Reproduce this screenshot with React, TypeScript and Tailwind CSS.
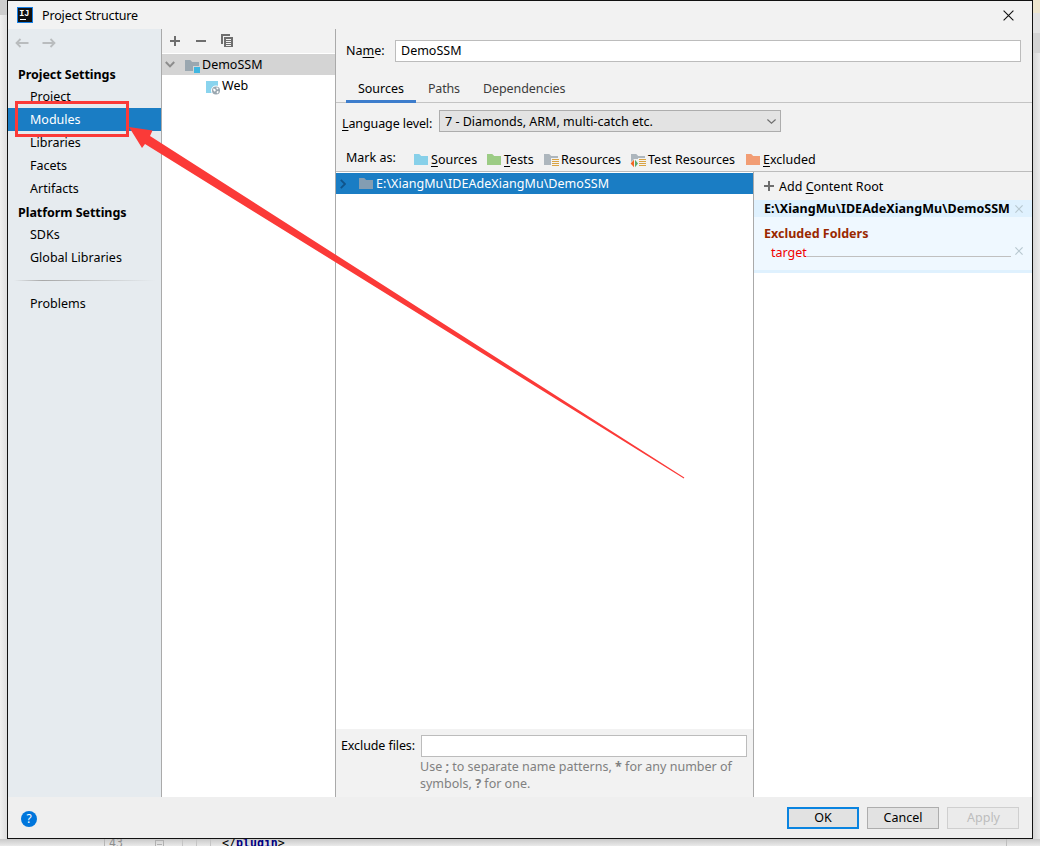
import type { ReactNode } from "react";

function Mnemonic({ children }: { children: ReactNode }) {
  return <span className="underline decoration-1 underline-offset-2">{children}</span>;
}

function FolderShape({ fill }: { fill: string }) {
  return <path d="M1 2h5.2l2 2H15v9H1z" fill={fill} />;
}

function Folder({ fill, kind }: { fill: string; kind?: "module" | "resources" | "test" }) {
  return (
    <svg width="16" height="16" viewBox="0 0 16 16" className="shrink-0" shapeRendering="geometricPrecision">
      <FolderShape fill={fill} />
      {kind === "module" && (
        <>
          <path d="M9 8h7v7H9z" fill="#d4d4d4" />
          <path d="M10 9h6v6h-6z" fill="#40b6e0" />
        </>
      )}
      {(kind === "resources" || kind === "test") && (
        <>
          <path d="M8 6h8v10H8z" fill="#f2f2f2" />
          <path d="M9 7h7v1H9zM9 9h7v1H9zM9 11h7v1H9zM9 13h7v1H9z" fill="#d9a343" />
        </>
      )}
      {kind === "test" && (
        <>
          <path d="M0 11.5L4 7h4v9H4z" fill="#f2f2f2" />
          <path d="M4 7.8v7.4L.6 11.5z" fill="#f26522" />
          <path d="M5 7.8v7.4l3-3.7z" fill="#59a869" />
        </>
      )}
    </svg>
  );
}

function WebIcon() {
  return (
    <svg width="16" height="16" viewBox="0 0 16 16" className="shrink-0">
      <path d="M1 2h12v12H1z" fill="#8ad4ee" />
      <circle cx="11" cy="11.5" r="5" fill="#ffffff" />
      <circle cx="11" cy="11.5" r="4" fill="#9aa7b0" />
      <path d="M8.2 9.6l2 .3.6 1.6-1 1.2-1.6-1.4zM11.5 8.3l2 .8-.6 1.4-1.4-.5zM12 12l1.8.4-1 2-1.2-.6z" fill="#ffffff" />
    </svg>
  );
}

function Plus() {
  return (
    <svg width="10" height="10" viewBox="0 0 10 10" className="shrink-0">
      <path d="M4 0h2v4h4v2H6v4H4V6H0V4h4z" fill="#6e6e6e" />
    </svg>
  );
}

function SmallCross() {
  return (
    <svg width="8" height="8" viewBox="0 0 8 8" className="shrink-0">
      <path d="M.4.4l7.2 7.2M7.6.4L.4 7.6" stroke="#b8c8d0" strokeWidth="1.2" fill="none" />
    </svg>
  );
}

function NavArrow({ flip }: { flip?: boolean }) {
  return (
    <svg width="14" height="10" viewBox="0 0 14 10" className={flip ? "-scale-x-100" : ""}>
      <path d="M13.5 5H1.5M5.5 1l-4 4 4 4" stroke="#b9bcbe" strokeWidth="1.8" fill="none" />
    </svg>
  );
}

function SideItem({ label, active }: { label: string; active?: boolean }) {
  return (
    <div className={`h-[23px] pl-[22px] leading-[23px] ${active ? "bg-[#1a7dc4] text-white" : ""}`}>{label}</div>
  );
}

function SideHeader({ label }: { label: string }) {
  return <div className="h-[23px] pl-[10px] font-bold leading-[25px] tracking-[-0.05px]">{label}</div>;
}

function Sidebar() {
  return (
    <aside className="flex w-[153px] shrink-0 flex-col bg-[#e6ebef]">
      <div className="flex h-[33px] gap-[13px] pl-[7px] pt-[9px]">
        <NavArrow />
        <NavArrow flip />
      </div>
      <SideHeader label="Project Settings" />
      <SideItem label="Project" />
      <SideItem label="Modules" active />
      <SideItem label="Libraries" />
      <SideItem label="Facets" />
      <SideItem label="Artifacts" />
      <SideHeader label="Platform Settings" />
      <SideItem label="SDKs" />
      <SideItem label="Global Libraries" />
      <div className="mx-[6px] mb-[11px] mt-[11px] h-px bg-linear-to-r from-transparent via-[#a8a8a8] via-20% to-transparent" />
      <SideItem label="Problems" />
    </aside>
  );
}

function ModuleTree() {
  return (
    <section className="flex w-[175px] shrink-0 flex-col border-x border-[#aaaaaa] bg-white">
      <div className="flex h-[24px] items-center bg-[#f2f2f2] pl-[8px]">
        <Plus />
        <svg width="10" height="10" viewBox="0 0 10 10" className="ml-[16px]">
          <path d="M0 4h10v2H0z" fill="#6e6e6e" />
        </svg>
        <svg width="13" height="13" viewBox="0 0 13 13" className="-mt-px ml-[15px]">
          <path d="M0 0h9v2H2v8H0z" fill="#6e6e6e" />
          <path d="M3 3h9v10H3z" fill="#6e6e6e" />
          <path d="M5 5h5v1H5zM5 7h5v1H5zM5 9h5v1H5zM5 11h5v1H5z" fill="#f2f2f2" />
        </svg>
      </div>
      <div className="mt-px flex h-[21px] items-center bg-[#d4d4d4] pl-[3px] leading-[21px]">
        <svg width="10" height="7" viewBox="0 0 10 7">
          <path d="M.8 1L5 5.4 9.2 1" stroke="#8c8c8c" strokeWidth="2" fill="none" />
        </svg>
        <span className="ml-[9px] mr-[2px] mt-[2px]">
          <Folder fill="#9aa7b0" kind="module" />
        </span>
        DemoSSM
      </div>
      <div className="flex h-[21px] items-center pl-[43px] leading-[21px]">
        <span className="mr-px mt-[2px]">
          <WebIcon />
        </span>
        Web
      </div>
    </section>
  );
}

function MarkAs() {
  return (
    <div className="flex h-[39px] items-center pl-[10px] pt-[14px]">
      <span className="-mt-[1px] mr-[15px] w-[52px] whitespace-nowrap">Mark as:</span>
      <div className="flex items-center pt-[3px] leading-[20px]">
        <span className="flex w-[73px] items-center gap-[2px]">
          <Folder fill="#87d0e9" />
          <span>
            <Mnemonic>S</Mnemonic>ources
          </span>
        </span>
        <span className="flex w-[57px] items-center gap-[2px]">
          <Folder fill="#9ccc85" />
          <span>
            <Mnemonic>T</Mnemonic>ests
          </span>
        </span>
        <span className="flex w-[87px] items-center gap-[2px]">
          <Folder fill="#adb6bd" kind="resources" />
          <span>Resources</span>
        </span>
        <span className="flex w-[115px] items-center gap-[2px]">
          <Folder fill="#adb6bd" kind="test" />
          <span>Test Resources</span>
        </span>
        <span className="flex items-center gap-[2px]">
          <Folder fill="#f29d74" />
          <span>
            <Mnemonic>E</Mnemonic>xcluded
          </span>
        </span>
      </div>
    </div>
  );
}

function ContentRoots() {
  return (
    <div className="flex min-w-0 flex-1 flex-col border-l border-[#aaaaaa] bg-white">
      <div className="flex h-[28px] items-center gap-[5px] bg-[#f2f2f2] pl-[10px]">
        <Plus />
        <span className="pt-[3px]">
          Add <Mnemonic>C</Mnemonic>ontent Root
        </span>
      </div>
      <div className="flex h-[17px] items-center bg-[#dff1fe] pl-[10px] font-bold leading-[17px]">
        <span className="w-[251px] whitespace-nowrap tracking-[0.05px]">E:\XiangMu\IDEAdeXiangMu\DemoSSM</span>
        <SmallCross />
      </div>
      <div className="flex h-[53px] flex-col bg-[#eff8ff] pl-[10px]">
        <div className="mt-[7px] h-[19px] font-bold leading-[20px] text-[#9a2800]">Excluded Folders</div>
        <div className="flex h-[18px] items-center pl-[7px] leading-[18px] text-[#f00000]">
          <span className="mt-[1px] leading-[17px]">target</span>
          <span className="mt-[9px] h-px flex-1 bg-[#c0c0c0]" />
          <span className="-mt-[2px] ml-[4px] mr-[9px] flex">
            <SmallCross />
          </span>
        </div>
      </div>
      <div className="h-[3px] bg-[#dff1fe]" />
    </div>
  );
}

function Editor() {
  return (
    <main className="flex min-w-0 flex-1 flex-col bg-[#f2f2f2]">
      <div className="flex h-[44px] items-start pl-[10px] pt-[11px]">
        <span className="w-[49px] leading-[21px]">
          Na<Mnemonic>m</Mnemonic>e:
        </span>
        <div className="h-[22px] w-[626px] border border-[#bcbcbc] bg-white pl-[5px] leading-[19px]">DemoSSM</div>
      </div>
      <div className="flex h-[30px] border-b border-[#c4c4c4] pl-[10px] leading-[31px] text-[#3c3c3c]">
        <div className="h-[30px] w-[70px] border-b-[3px] border-[#3d7dcc] text-center text-black">Sources</div>
        <div className="ml-[12px] w-[55px] tracking-[-0.2px]">Paths</div>
        <div className="tracking-[-0.08px]">Dependencies</div>
      </div>
      <div className="flex h-[29px] items-start pl-[6px] pt-[7px]">
        <span className="w-[97px] tracking-[-0.1px] leading-[27px]">
          <Mnemonic>L</Mnemonic>anguage level:
        </span>
        <div className="flex h-[22px] w-[342px] justify-between border border-[#adadad] bg-[#e3e3e3] pl-[5px] pr-[3px] leading-[21px]">
          <span>7 - Diamonds, ARM, multi-catch etc.</span>
          <svg width="11" height="20" viewBox="0 0 11 20">
            <path d="M1.4 8.5l4.1 3.6 4.1-3.6" stroke="#6e6e6e" strokeWidth="1.2" fill="none" />
          </svg>
        </div>
      </div>
      <MarkAs />
      <div className="flex min-h-0 flex-1 border-t border-[#bcbcbc]">
        <div className="flex w-[417px] shrink-0 flex-col bg-white">
          <div className="mt-px flex h-[21px] items-center bg-[#1a7dc4] pl-[4px] leading-[21px] text-white">
            <svg width="6" height="10" viewBox="0 0 6 10">
              <path d="M.8.8L5 5 .8 9.2" stroke="#10548a" strokeWidth="1.8" fill="none" />
            </svg>
            <span className="ml-[12px] mr-[2px]">
              <Folder fill="#839db2" />
            </span>
            <span className="tracking-[0.04px]">E:\XiangMu\IDEAdeXiangMu\DemoSSM</span>
          </div>
          <div className="flex-1" />
          <div className="flex h-[68px] bg-[#f2f2f2] pl-[5px] pt-[6px]">
            <span className="w-[80px] whitespace-nowrap tracking-[-0.1px] leading-[21px]">Exclude files:</span>
            <div className="w-[326px]">
              <div className="h-[22px] border border-[#bcbcbc] bg-white" />
              <p className="-ml-px mt-[1px] whitespace-nowrap leading-[17px] text-[#808080]">
                Use <b>;</b> to separate name patterns, <b>*</b> for any number of
                <br />
                symbols, <b>?</b> for one.
              </p>
            </div>
          </div>
        </div>
        <ContentRoots />
      </div>
    </main>
  );
}

function Footer() {
  return (
    <footer className="flex h-[41px] items-center bg-[#efefef] pl-[13px] pr-[13px]">
      <div className="mt-[3px] flex h-4 w-4 items-center justify-center rounded-full bg-[#0076dc] text-[12px] leading-[16px] text-white">
        ?
      </div>
      <div className="flex-1" />
      <div className="flex gap-[8px] text-center">
        <button className="h-[22px] w-[72px] border-2 border-[#0a84e0] bg-[#e2e2e2] leading-[18px]">OK</button>
        <button className="h-[22px] w-[72px] border border-[#adadad] bg-[#e2e2e2] leading-[20px]">Cancel</button>
        <button className="h-[22px] w-[72px] border border-[#cfcfcf] bg-[#ebebeb] pl-[1px] leading-[20px] text-[#bdbdbd]">
          Apply
        </button>
      </div>
    </footer>
  );
}

function TitleBar() {
  return (
    <header className="flex h-[28px] items-center bg-[#f2f2f2] pl-[9px] pr-[18px]">
      <svg width="16" height="16" viewBox="0 0 16 16">
        <path d="M0 0h16v16H0z" fill="#167fe6" />
        <path d="M1 1h14v14H1z" fill="#111111" />
        <text x="2.2" y="8.6" fontSize="8.5" fontWeight="700" fontFamily="Liberation Mono, monospace" fill="#ffffff">
          IJ
        </text>
        <path d="M3 12h6v1H3z" fill="#ffffff" />
      </svg>
      <span className="ml-[9px] flex-1 pt-[2px] tracking-[-0.15px]">Project Structure</span>
      <svg width="11" height="11" viewBox="0 0 11 11">
        <path d="M.6.6l9.8 9.8M10.4.6L.6 10.4" stroke="#111111" strokeWidth="1.1" fill="none" />
      </svg>
    </header>
  );
}

export default function App() {
  return (
    <div className="relative flex h-[846px] w-[1040px] flex-col overflow-hidden bg-[#ececec] font-['Noto_Sans',sans-serif] text-[12.5px] text-black">
      <div className="flex h-[839px]">
        <div className="flex w-[7px] shrink-0 flex-col bg-linear-to-r from-[#f0f0f0] to-[#dedede]">
          <div className="h-[15px] bg-[#cdcdcd]" />
        </div>
        <div className="flex w-[1026px] shrink-0 flex-col border border-[#111111]">
          <TitleBar />
          <div className="flex min-h-0 flex-1">
            <Sidebar />
            <ModuleTree />
            <Editor />
          </div>
          <Footer />
        </div>
        <div className="flex flex-1 flex-col bg-linear-to-r from-[#d6d6d6] to-[#ebebeb]">
          <div className="h-[13px] bg-[#eee6cf]" />
          <div className="h-[20px] bg-[#e2e2e2]" />
          <div className="h-[20px] bg-[#d3d3d3]" />
        </div>
      </div>
      <div className="flex h-[7px] overflow-hidden bg-linear-to-b from-[#c9c9c9] to-[#eaeaea] font-['DejaVu_Sans_Mono',monospace] text-[11.6px] leading-[15px]">
        <div className="ml-[104px] h-[7px] w-[51px] border-l border-[#b5b5b5] pl-[4px] text-[#8f8f8f]">
          <span className="-mt-[3px] block">43</span>
        </div>
        <div className="mt-px h-[9px] w-[9px] border border-[#b0b0b0] px-[1px] pt-[3px]">
          <div className="h-px bg-[#b0b0b0]" />
        </div>
        <div className="ml-[18px] w-[14px] border-l border-[#c4c4c4]" />
        <div className="w-[14px] border-l border-[#c4c4c4]" />
        <div className="w-[796px] border-l border-[#c4c4c4] pl-[11px]">
          <span className="-mt-[3px] block">
            &lt;/<b className="text-[#000080]">plugin</b>&gt;
          </span>
        </div>
        <div className="flex-1 border-l border-[#bdbdbd]" />
      </div>
      <svg className="pointer-events-none absolute left-0 top-0" width="1040" height="846" viewBox="0 0 1040 846">
        <path d="M16.5 102.5h111v33h-111z" fill="none" stroke="#fb3a38" strokeWidth="3" />
        <path d="M129 127l23.5 3.5-2.5 5.5L684.3 477.6l-.5.8L145 144l-3 4z" fill="#fb3a38" />
      </svg>
    </div>
  );
}
